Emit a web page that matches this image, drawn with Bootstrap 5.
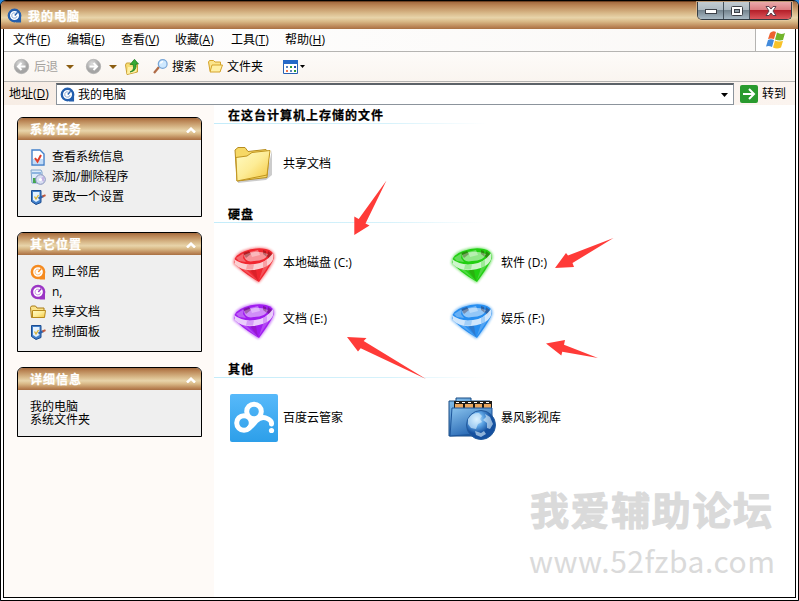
<!DOCTYPE html>
<html lang="zh-CN">
<head>
<meta charset="utf-8">
<meta name="viewport" content="width=device-width, initial-scale=1">
<title>我的电脑</title>
<link href="https://cdn.jsdelivr.net/npm/bootstrap@5.3.0/dist/css/bootstrap.min.css" rel="stylesheet">
<style>
:root{--wood:linear-gradient(#a36a3e 0,#b98353 12%,#d9ba8b 42%,#e8d4aa 58%,#d9b987 72%,#b98354 92%,#a87043 100%)}
body{font:12px/16px "Open Sans","Noto Sans CJK SC",sans-serif;color:#000;width:799px;height:601px;background:#2a86d8;overflow:hidden}
svg{display:block;flex:none;overflow:visible}
.win{width:799px;height:601px;border:1px solid #000;border-radius:6px 6px 0 0;background:#fff;overflow:hidden}
.titlebar{height:28px;background:var(--wood);padding-left:6px;border-top:1px solid #6d4020}
.heading-b{font-weight:700;letter-spacing:1px;-webkit-text-stroke:.25px}
.titlebar .heading-b{color:#fff;margin:2px 0 0 6px}
.caps{height:18px;width:95px;border:1px solid #333c44;border-top:0;border-radius:0 0 5px 5px;overflow:hidden;margin-right:6px;box-shadow:0 0 0 1px #e7cba6a0}
.cap{height:100%;background:linear-gradient(#c3ccd2,#aebac2 45%,#75858f 50%,#a9bac5);border-right:1px solid #46525c}
.cap.shut{background:linear-gradient(#eaa9ab,#dc7f83 45%,#b5202a 50%,#dc565b);border:0}
.inner{margin:0 2px 2px;border:1px solid #000;border-top:0;height:569px}
.menubar{height:23px;border-bottom:1px solid #b5b4b2;background:linear-gradient(90deg,#fff,#faf8f6)}
.menubar .mi{width:54px}
.menubar .mi,.addr .lbl{white-space:nowrap}
.flag{width:40px;border-left:1px solid #b5b4b2;background:#fff}
.tools{height:30px;background:linear-gradient(#fdfbf9,#faf5f0);border-bottom:1px solid #b5b4b2}
.addr{height:23px;background:linear-gradient(90deg,#f7ede5,#fbf4ef)}
.addr .box{width:678px;height:22px;margin-top:1px;border:1px solid #8c949c;border-top:2px solid #5c6268;background:#fff}
.side{width:210px;background:#fefaf7;padding:12px 0 0 13px}
.pane{width:185px;border:1px solid #000;border-radius:6px 6px 0 0;background:#efefef;margin-bottom:15px;overflow:hidden}
.pane header{height:22px;background:var(--wood);color:#fff;padding:4px 5px 0 12px}
.pane header svg{margin-top:5px}
.pane .task{height:20px;padding-left:12px}
.pane .task span{margin-left:6px}
.p1{height:100px}.p2{height:120px}.p3{height:70px}
.lines{line-height:13px;padding:10px 0 0 12px}
.main h2{font-size:12px;line-height:19px;height:19px;margin:0;padding-left:14px;border-bottom:1px solid;border-image:linear-gradient(90deg,#c4ecfa,#d6f2fb 30%,#fff 47%) 1}
.main h2 span{position:relative;top:1px}
.files{padding:16px 0 16px 16px;row-gap:8px}
.files .it{width:218px;height:48px}
.files .it span{margin-left:5px;padding-bottom:1px}
.overlay{position:absolute;left:0;top:0;pointer-events:none}
.wm1{font:700 39px "Noto Sans CJK SC",sans-serif;stroke:#dadada;stroke-width:1;stroke-linejoin:round}
.wm2{font:30px "Noto Sans CJK SC",sans-serif}
</style>
</head>
<body>
<svg width="0" height="0" class="position-absolute">
<defs>
<linearGradient id="gy" x2="1" y2="1"><stop stop-color="#fffbc4"/><stop offset=".5" stop-color="#fdec96"/><stop offset="1" stop-color="#f5c63c"/></linearGradient>
<linearGradient id="gb" x2="0" y2="1"><stop stop-color="#57b9fa"/><stop offset="1" stop-color="#2d9fe9"/></linearGradient>
<linearGradient id="gf" x2=".6" y2="1"><stop stop-color="#8ac4ee"/><stop offset="1" stop-color="#1e5fae"/></linearGradient>
<radialGradient id="gg" cx=".35" cy=".3"><stop stop-color="#d7f0ff"/><stop offset=".5" stop-color="#5da4e4"/><stop offset="1" stop-color="#15509f"/></radialGradient>
<radialGradient id="ball" cx=".4" cy=".3"><stop stop-color="#dcdcdc"/><stop offset="1" stop-color="#a4a4a4"/></radialGradient>
<filter id="soft" x="-20%" y="-20%" width="140%" height="140%"><feGaussianBlur stdDeviation="1.3"/></filter>
<symbol id="q" viewBox="0 0 16 16"><path d="M10.500 9H15v6.500H9.500z" fill="currentColor"/><circle cx="8" cy="8" r="6.100" fill="#fff" stroke="currentColor" stroke-width="2.500"/><path d="M9 5.300a2.900 2.900 0 1 0 1.800 3.200" fill="none" stroke="currentColor" stroke-width=".8" opacity=".65"/><path d="M11.300 4.600L8.300 8" stroke="currentColor" stroke-width="1.500"/></symbol>
<symbol id="fold" viewBox="0 0 16 16"><path d="M.5 3.500l1-1.500h4l1.500 2h7v9.500H1.500z" fill="#fbe38b" stroke="#a87a16"/><path d="M2.500 6.500h13l-1 7h-12z" fill="url(#gy)" stroke="#b88a1c"/></symbol>
<symbol id="panel" viewBox="0 0 16 16"><path d="M1.500 1.500h9.500v12L6 15.500l-4.500-3z" fill="#3f7fca" stroke="#1c4c91"/><path d="M3 3h6.500v8L6 13l-3-2z" fill="#e4f1fd"/><path d="M4.500 7.500l1.500 2.500 2.500-4" stroke="#d9b43c" fill="none" stroke-width="1.400"/><path d="M8.500 9.500l4.500-2.200" stroke="#2c62ac" stroke-width="2.200"/><path d="M12.500 7.500l3-1.300" stroke="#c05a3e" stroke-width="2"/></symbol>
<symbol id="gem" viewBox="0 0 48 48"><path d="M3 24Q3 15 14 11Q25 7 36 9Q46 12 45 19Q43 27 30 43L28 44Q13 34 3 25z" fill="currentColor" opacity=".5" filter="url(#soft)"/><path d="M4 23Q4 16 15 12Q26 8 36 10Q44 12 44 18Q43 24 29 43Q10 32 4 23z" fill="currentColor"/><path d="M14 16Q25 10 38 15Q36 22 24 22Q15 24 14 16z" fill="#fff" opacity=".5"/><path d="M6 19l8-5-1 5 3 4-7-1z" fill="#fff" opacity=".3"/><path d="M13 14l6-2 2 3-5 4zM33 11l3 1 1 6-4-3zM38 12l4 3-2 6-3-4z" fill="#300" opacity=".3"/><path d="M20 13l8-2 2 5-8 2z" fill="#fff" opacity=".35"/><path d="M4 20Q13 27 25 25Q36 24 43 14Q45 20 40 25Q34 30 23 31Q11 32 5 25z" fill="#fff" opacity=".78"/><path d="M17 26l7-.5-1 5-7 0zM33 23l4-2 0 6-4 1.500z" fill="currentColor" opacity=".28"/><path d="M9 28l8 3 11 11zM33 29l6-3-10 15z" fill="#fff" opacity=".2"/><path d="M20 31l6 0 2 11z" fill="#500" opacity=".14"/></symbol>
<symbol id="chev" viewBox="0 0 10 6"><path d="M1 5.500L5 1.700 9 5.500" fill="none" stroke="#fff" stroke-width="2.500"/></symbol>
</defs></svg>
<div class="win">
 <div class="titlebar d-flex align-items-center">
  <svg width="15" height="15" style="color:#245fae"><use href="#q"/></svg><span class="heading-b">我的电脑</span>
  <div class="caps d-flex ms-auto align-self-start">
   <div class="cap d-flex justify-content-center align-items-center" style="width:26px"><svg width="12" height="6"><rect x=".5" y="1.500" width="11" height="4" fill="#fff" stroke="#3c4047"/></svg></div>
   <div class="cap d-flex justify-content-center align-items-center" style="width:26px"><svg width="12" height="10"><rect x=".5" y=".5" width="11" height="9" rx="1" fill="#fff" stroke="#3c4047"/><rect x="3.500" y="3.500" width="5" height="3" fill="#8f9da7" stroke="#3c4047"/></svg></div>
   <div class="cap shut flex-fill d-flex justify-content-center align-items-center"><svg width="12" height="10"><path d="M1 .5h3l2 2.500 2-2.500h3L8 5l3 4.500H8L6 7 4 9.500H1L4 5z" fill="#fff" stroke="#5d3f4c"/></svg></div>
  </div>
 </div>
 <div class="inner d-flex flex-column">
  <div class="menubar d-flex flex-shrink-0">
   <div class="d-flex align-items-center flex-fill" style="padding-left:9px"><span class="mi">文件(<u>F</u>)</span><span class="mi">编辑(<u>E</u>)</span><span class="mi">查看(<u>V</u>)</span><span class="mi me-1">收藏(<u>A</u>)</span><span class="mi" style="margin-left:-2px">工具(<u>T</u>)</span><span class="mi">帮助(<u>H</u>)</span></div>
   <div class="flag d-flex align-items-center justify-content-center"><svg width="20" height="18" viewBox="0 0 20 18"><path d="M4 2Q7-1 10 1L8 8Q5 7 2 8z" fill="#ee6330"/><path d="M11 1.500Q15 4 19 2L17 9Q13 10 9 8.500z" fill="#72b52c"/><path d="M2 9Q5 7.500 8 9L6 16Q3 14.500 0 15.500z" fill="#438bdc"/><path d="M9 9.500Q12 11 17 10L15 16.500Q11 18.500 7 16.500z" fill="#f8c229"/></svg></div>
  </div>
  <div class="tools d-flex align-items-center flex-shrink-0">
   <svg width="15" height="15" viewBox="0 0 15 15" style="margin-left:10px"><circle cx="7.500" cy="7.500" r="7.200" fill="url(#ball)" stroke="#aaa" stroke-width=".6"/><path d="M11.500 7.500H4M7.500 4L4 7.500 7.500 11" fill="none" stroke="#fff" stroke-width="2"/></svg>
   <span style="color:#a5a29e;margin-left:5px">后退</span>
   <svg width="8" height="4" style="margin-left:8px"><path d="M0 0h8L4 4z" fill="#8b5d10"/></svg>
   <svg width="15" height="15" viewBox="0 0 15 15" style="margin-left:12px"><circle cx="7.500" cy="7.500" r="7.200" fill="url(#ball)" stroke="#aaa" stroke-width=".6"/><path d="M3.500 7.500H11M7.500 4L11 7.500 7.500 11" fill="none" stroke="#fff" stroke-width="2"/></svg>
   <svg width="8" height="4" style="margin-left:8px"><path d="M0 0h8L4 4z" fill="#8b5d10"/></svg>
   <svg width="14" height="16" viewBox="0 0 14 16" style="margin-left:8px"><path d="M.5 6l1-2h4l1 1.500h6V13L2 15.500z" fill="#f7dc74" stroke="#cca235"/><path d="M3 8h9l-1 5-9 2z" fill="#fff0a3"/><path d="M5 13Q10 11 8 5.500H5L9.500.3 13.500 5H11Q12 12 5 13z" fill="#38aa35" stroke="#197b20" stroke-width=".7"/></svg>
   <svg width="15" height="15" viewBox="0 0 15 15" style="margin-left:14px"><path d="M1 14l5-6" stroke="#b06b47" stroke-width="2.200"/><circle cx="9.700" cy="5" r="4.400" fill="#cfe9ff" stroke="#79a6d7" stroke-width="1.200"/><path d="M7.500 4.500Q8 2.500 10 2.400" stroke="#fff" fill="none" stroke-width="1.500"/></svg>
   <span style="margin-left:4px">搜索</span>
   <svg width="15" height="13" viewBox="0 0 15 13" style="margin-left:12px"><path d="M.5 2l1-1.500h4L7 2h5.500v9H2z" fill="#fbe58c" stroke="#d5a32b"/><path d="M4 5h10.500L12 12H2z" fill="#fff0a5" stroke="#d5a32b"/></svg>
   <span style="margin-left:4px">文件夹</span>
   <svg width="15" height="14" style="margin-left:20px"><path d="M.5.5h14v13H.5z" fill="#fff" stroke="#2862b5"/><path d="M0 0h15v4H0z" fill="#2468c8"/><path d="M3 6h2v2H3zM7 10h2v2H7z" fill="#5b82be"/><path d="M7 6h2v2H7zM11 10h2v2h-2z" fill="#2e9a38"/><path d="M3 10h2v2H3z" fill="#ef764d"/><path d="M11 6h2v2h-2z" fill="#2647aa"/></svg>
   <svg width="5" height="3" style="margin-left:2px"><path d="M0 0h5L2.500 3z"/></svg>
  </div>
  <div class="addr d-flex align-items-center flex-shrink-0">
   <span class="lbl" style="width:47px;padding-left:5px;margin-right:5px">地址(<u>D</u>)</span>
   <div class="box d-flex align-items-center"><svg width="15" height="15" style="color:#245fae;margin-left:3px"><use href="#q"/></svg><span style="margin-left:3px">我的电脑</span><svg class="ms-auto" width="7" height="4" style="margin-right:5px"><path d="M0 0h7L3.500 4z"/></svg></div>
   <svg width="18" height="18" style="margin-left:6px"><rect width="18" height="18" rx="2" fill="#299a2e"/><path d="M3 9h11M9 4l5 5-5 5" fill="none" stroke="#fff" stroke-width="2"/></svg><span style="margin-left:4px">转到</span>
  </div>
  <div class="d-flex flex-fill">
   <aside class="side flex-shrink-0">
    <section class="pane p1"><header class="d-flex justify-content-between"><span class="heading-b">系统任务</span><svg width="10" height="6"><use href="#chev"/></svg></header>
     <div style="padding-top:7px">
      <div class="task d-flex align-items-center"><svg width="16" height="16"><path d="M2 1h8l4 4v11H2z" fill="#fff" stroke="#4381cb" stroke-width="1.400"/><path d="M3 10h10v5H3z" fill="#c3dcf7"/><path d="M5 9l2.500 3.500L11 6" fill="none" stroke="#e0402c" stroke-width="2"/></svg><span>查看系统信息</span></div>
      <div class="task d-flex align-items-center"><svg width="16" height="16"><path d="M1 1h10l1 2v11H2z" fill="#dcebf9" stroke="#7fa4cc"/><path d="M2 3h9v2H2z" fill="#8cb4e0"/><path d="M3 9h3v5H3z" fill="#43a64c"/><circle cx="10.500" cy="10.500" r="4.800" fill="#d9dff2" stroke="#8593bd"/><path d="M10 10l4-3v6z" fill="#c4b3e4"/><circle cx="10.500" cy="10.500" r="1.500" fill="#fff"/></svg><span>添加/删除程序</span></div>
      <div class="task d-flex align-items-center"><svg width="16" height="16"><use href="#panel"/></svg><span>更改一个设置</span></div>
     </div></section>
    <section class="pane p2"><header class="d-flex justify-content-between"><span class="heading-b">其它位置</span><svg width="10" height="6"><use href="#chev"/></svg></header>
     <div style="padding-top:7px">
      <div class="task d-flex align-items-center"><svg width="16" height="16" style="color:#f58a1f"><use href="#q"/></svg><span>网上邻居</span></div>
      <div class="task d-flex align-items-center"><svg width="16" height="16" style="color:#9b35c5"><use href="#q"/></svg><span>n,</span></div>
      <div class="task d-flex align-items-center"><svg width="16" height="16"><use href="#fold"/></svg><span>共享文档</span></div>
      <div class="task d-flex align-items-center"><svg width="16" height="16"><use href="#panel"/></svg><span>控制面板</span></div>
     </div></section>
    <section class="pane p3"><header class="d-flex justify-content-between"><span class="heading-b">详细信息</span><svg width="10" height="6"><use href="#chev"/></svg></header>
     <div class="lines">我的电脑<br>系统文件夹</div></section>
   </aside>
   <main class="main flex-fill">
    <h2 class="heading-b"><span>在这台计算机上存储的文件</span></h2>
    <div class="files d-flex flex-wrap"><div class="it d-flex align-items-center"><svg width="48" height="48" viewBox="0 0 48 48"><path d="M8 41l28-4 6-27v25l-6 5-28 3z" fill="#0003"/><path d="M5 10l3-2.500h7l3 4 18-2 3 3-2 25L7 41z" fill="#f6d865" stroke="#b68c20"/><path d="M6 17.500L17 16l5-3.500 18-2-3 24.500L7 41z" fill="url(#gy)" stroke="#c0951f"/></svg><span>共享文档</span></div></div>
    <h2 class="heading-b"><span>硬盘</span></h2>
    <div class="files d-flex flex-wrap">
     <div class="it d-flex align-items-center"><svg width="48" height="48" style="color:#f12730"><use href="#gem"/></svg><span>本地磁盘 (C:)</span></div>
     <div class="it d-flex align-items-center"><svg width="48" height="48" style="color:#22cf12"><use href="#gem"/></svg><span>软件 (D:)</span></div>
     <div class="it d-flex align-items-center"><svg width="48" height="48" style="color:#a01cf0"><use href="#gem"/></svg><span>文档 (E:)</span></div>
     <div class="it d-flex align-items-center"><svg width="48" height="48" style="color:#278ef0"><use href="#gem"/></svg><span>娱乐 (F:)</span></div>
    </div>
    <h2 class="heading-b"><span>其他</span></h2>
    <div class="files d-flex flex-wrap">
     <div class="it d-flex align-items-center"><svg width="48" height="48"><rect width="48" height="48" rx="2" fill="url(#gb)"/><g fill="none" stroke="#fff" stroke-width="5"><circle cx="14" cy="29" r="7.300"/><circle cx="24" cy="17.500" r="7.300"/><path d="M19 34Q23 31 26 27Q31 22 36 24Q42 26 41.500 30" stroke-linecap="round"/></g><circle cx="41.500" cy="36.500" r="2.600" fill="#fff"/></svg><span>百度云管家</span></div>
     <div class="it d-flex align-items-center"><svg width="48" height="48"><path d="M1 7h7V4h15v3h19v35H1z" fill="url(#gf)" stroke="#194b83"/><path d="M6 7h38v8H6z" fill="#1d1b18"/><path d="M7 10h8v5H7zM17 10h8v5h-8zM27 10h7v5h-7zM36 10h7v5h-7z" fill="#eaa760"/><path d="M8 8.500h35" stroke="#fff" stroke-dasharray="3 3"/><path d="M4 14h40v25L2 42z" fill="url(#gf)" stroke="#1c559a"/><circle cx="33" cy="31" r="14.500" fill="url(#gg)" stroke="#235b9e"/><path d="M20 25Q24 18 31 19l3 3-2 3 2 3-4 2-2 5-5-1-3-4zM37 20l5 3 3 7-3 5-3-1 0-5-4-3 3-3zM27 37l6 2 3-2 2 3-5 3-5-2z" fill="#dff4ff" opacity=".6"/></svg><span>暴风影视库</span></div>
    </div>
   </main>
  </div>
 </div>
</div>
<svg class="overlay" width="799" height="601" viewBox="0 0 799 601">
 <g fill="#ff3b38"><path d="M386.500 180.500L358.700 219 354.300 216.500V235L369.500 225.500 365.500 223.500z"/><path d="M613.500 238L568 255.500 566 253 555 268 574 267 572.500 263z"/><path d="M347 337L366.500 338 363.700 341 426 379 360.700 348.300 358 351.500z"/><path d="M546 343.500L565 340 564 344.700 598 358 562.300 351.700 561.300 355.500z"/></g>
 <g fill="#dadada"><text class="wm1" x="530" y="525" textLength="242">我爱辅助论坛</text><text class="wm2" x="529" y="573" textLength="246">www.52fzba.com</text></g>
</svg>
<script src="https://cdn.jsdelivr.net/npm/bootstrap@5.3.0/dist/js/bootstrap.bundle.min.js"></script>
</body>
</html>
